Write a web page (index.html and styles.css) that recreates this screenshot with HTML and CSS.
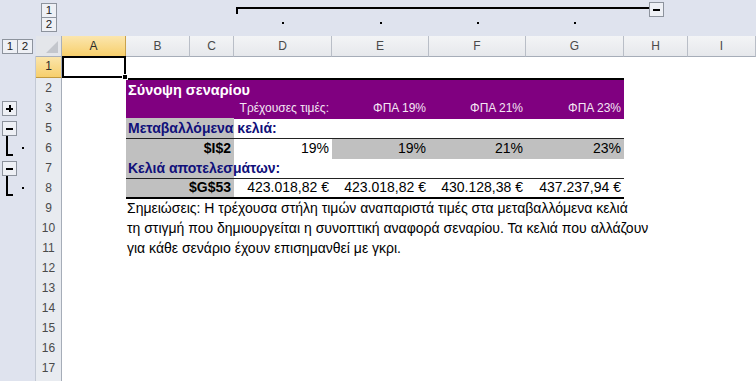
FILE: index.html
```html
<!DOCTYPE html>
<html lang="el">
<head>
<meta charset="utf-8">
<title>Σύνοψη σεναρίου</title>
<link rel="stylesheet" href="styles.css">
</head>
<body>
<div class="sheet">
  <div class="row top">
    <div class="lvl-col c2"><span class="lbtn">1</span><span class="lbtn">2</span></div>
    <div class="dotcell cD"><i class="dot"></i></div>
    <div class="dotcell cE"><i class="dot"></i></div>
    <div class="dotcell cF"><i class="dot"></i></div>
    <div class="dotcell cG"><i class="dot"></i></div>
    <div class="hbracket"><span class="hline"></span><span class="obtn minus"></span></div>
  </div>
  <div class="row hdr">
    <div class="ol lvl-row"><span class="lbtn">1</span><span class="lbtn">2</span></div>
    <div class="corner c2"><i class="tri"></i></div>
    <div class="ch cA sel">A</div>
    <div class="ch cB">B</div>
    <div class="ch cC">C</div>
    <div class="ch cD">D</div>
    <div class="ch cE">E</div>
    <div class="ch cF">F</div>
    <div class="ch cG">G</div>
    <div class="ch cH">H</div>
    <div class="ch cI">I</div>
  </div>
  <div class="row r1">
    <div class="ol"></div>
    <div class="rh sel">1</div>
    <div class="cA selbox"></div>
  </div>
  <div class="row">
    <div class="ol"></div>
    <div class="rh">2</div>
    <div class="purple title">Σύνοψη σεναρίου</div>
  </div>
  <div class="row">
    <div class="ol ol-btn"><span class="obtn plus"></span></div>
    <div class="rh">3</div>
    <div class="purple"></div>
    <div class="cell cD right wt">Τρέχουσες τιμές:</div>
    <div class="cell cE right wt">ΦΠΑ 19%</div>
    <div class="cell cF right wt">ΦΠΑ 21%</div>
    <div class="cell cG right wt">ΦΠΑ 23%</div>
  </div>
  <div class="row">
    <div class="ol ol-start"><span class="obtn minus"></span><span class="vline"></span></div>
    <div class="rh">5</div>
    <div class="cell cBC gray label">Μεταβαλλόμενα κελιά:</div>
  </div>
  <div class="row">
    <div class="ol ol-end"><span class="foot"></span><i class="dot"></i></div>
    <div class="rh">6</div>
    <div class="cell cBC gray ref right bt">$I$2</div>
    <div class="cell cD right bt">19%</div>
    <div class="cell cE gray right bt">19%</div>
    <div class="cell cF gray right bt">21%</div>
    <div class="cell cG gray right bt">23%</div>
  </div>
  <div class="row">
    <div class="ol ol-start"><span class="obtn minus"></span><span class="vline"></span></div>
    <div class="rh">7</div>
    <div class="cell cBC gray label">Κελιά αποτελεσμάτων:</div>
  </div>
  <div class="row">
    <div class="ol ol-end"><span class="foot"></span><i class="dot"></i></div>
    <div class="rh">8</div>
    <div class="cell cBC gray ref right bt bb">$G$53</div>
    <div class="cell cD right bt bb">423.018,82 €</div>
    <div class="cell cE right bt bb">423.018,82 €</div>
    <div class="cell cF right bt bb">430.128,38 €</div>
    <div class="cell cG right bt bb">437.237,94 €</div>
  </div>
  <div class="row">
    <div class="ol"></div>
    <div class="rh">9</div>
    <div class="cell cNote note">Σημειώσεις: Η τρέχουσα στήλη τιμών αναπαριστά τιμές στα μεταβαλλόμενα κελιά</div>
  </div>
  <div class="row">
    <div class="ol"></div>
    <div class="rh">10</div>
    <div class="cell cNote note">τη στιγμή που δημιουργείται η συνοπτική αναφορά σεναρίου. Τα κελιά που αλλάζουν</div>
  </div>
  <div class="row">
    <div class="ol"></div>
    <div class="rh">11</div>
    <div class="cell cNote note">για κάθε σενάριο έχουν επισημανθεί με γκρι.</div>
  </div>
  <div class="row"><div class="ol"></div><div class="rh">12</div></div>
  <div class="row"><div class="ol"></div><div class="rh">13</div></div>
  <div class="row"><div class="ol"></div><div class="rh">14</div></div>
  <div class="row"><div class="ol"></div><div class="rh">15</div></div>
  <div class="row"><div class="ol"></div><div class="rh">16</div></div>
  <div class="row"><div class="ol"></div><div class="rh">17</div></div>
  <div class="row"><div class="ol"></div><div class="rh"></div></div>
</div>
</body>
</html>
```
FILE: styles.css
```css
html, body {
  margin: 0;
  padding: 0;
  background: #fff;
}
body {
  font-family: "Liberation Sans", Arial, sans-serif;
}
.sheet {
  width: 756px;
  height: 381px;
  overflow: hidden;
  background: #fff;
}
.row {
  display: grid;
  grid-template-columns: 36px 26px 64px 64px 44px 98px 97px 97px 98px 64px 68px;
  height: 20px;
}
.row > * {
  grid-row: 1;
  min-width: 0;
}
.c2 { grid-column: 2; }
.cA { grid-column: 3; }
.cB { grid-column: 4; }
.cNote { grid-column: 4 / 12; }
.cBC { grid-column: 4 / 6; }
.cC { grid-column: 5; }
.cD { grid-column: 6; }
.cE { grid-column: 7; }
.cF { grid-column: 8; }
.cG { grid-column: 9; }
.cH { grid-column: 10; }
.cI { grid-column: 11; }

/* top outline band */
.top {
  height: 36px;
  background: #dfe3ee;
}
.lvl-col {
  display: flex;
  flex-direction: column;
  padding: 3px 0 0 5px;
}
.lbtn {
  box-sizing: border-box;
  width: 16px;
  height: 15px;
  border: 1px solid #8d939d;
  background: #eef0f5;
  font-size: 11.5px;
  line-height: 13px;
  color: #222;
  text-align: center;
}
.lvl-col .lbtn + .lbtn { margin-top: -1px; }
.lvl-row .lbtn + .lbtn { margin-left: -1px; }
.dotcell {
  display: flex;
  justify-content: center;
  padding-top: 22px;
}
.dot {
  display: block;
  width: 2px;
  height: 2px;
  background: #000;
}
.hbracket {
  grid-column: 6 / 11;
  display: flex;
  align-items: flex-start;
  padding: 2px 0 0 2px;
}
.hline {
  box-sizing: border-box;
  width: 413px;
  height: 7px;
  margin-top: 5px;
  border-top: 2px solid #000;
  border-left: 2px solid #000;
}
.obtn {
  box-sizing: border-box;
  display: flex;
  align-items: center;
  justify-content: center;
  width: 15px;
  height: 15px;
  border: 1px solid #8d939d;
  background: #eef0f5;
  position: relative;
  flex: none;
}
.obtn::before {
  content: "";
  width: 7px;
  height: 2px;
  background: #000;
}
.obtn.plus::after {
  content: "";
  position: absolute;
  left: 5.5px;
  top: 3px;
  width: 2px;
  height: 7px;
  background: #000;
}

/* headers */
.hdr {
  height: 20px;
}
.ol {
  grid-column: 1;
  background: #dfe3ee;
  border-right: 1px solid #c3c9d4;
}
.lvl-row {
  display: flex;
  padding: 3px 0 0 2px;
  border-right: 0;
}
.corner {
  box-sizing: border-box;
  background: #e4e6ea;
  border-right: 1px solid #a9b0bb;
  border-bottom: 1px solid #a9b0bb;
  position: relative;
}
.tri {
  position: absolute;
  right: 3px;
  bottom: 3px;
  width: 0;
  height: 0;
  border-left: 12px solid transparent;
  border-bottom: 12px solid #c3c6cc;
}
.ch {
  box-sizing: border-box;
  background: linear-gradient(#f3f4f6, #e6e8ec);
  border-right: 1px solid #b9bec7;
  border-bottom: 1px solid #a6adb8;
  font-size: 12px;
  line-height: 20px;
  text-align: center;
  color: #4a4a4a;
}
.ch.sel {
  background: linear-gradient(#fbe6ae, #f7cf6c);
  border-right-color: #c9a24c;
  border-bottom-color: #c29a3e;
  color: #2b2b2b;
}
.rh {
  box-sizing: border-box;
  grid-column: 2;
  background: #e8ebf0;
  border-right: 1px solid #a6adb8;
  border-bottom: 1px solid #c2c8d2;
  font-size: 12px;
  line-height: 20px;
  text-align: center;
  color: #4a4a4a;
}
.rh.sel {
  background: linear-gradient(#fbe6ae, #f7cf6c);
  border-bottom-color: #c29a3e;
  color: #2b2b2b;
}
.r1 { height: 22px; }

.selbox {
  box-sizing: border-box;
  border: 2px solid #000;
  position: relative;
}
.selbox::after {
  content: "";
  position: absolute;
  right: -4px;
  bottom: -4px;
  width: 4px;
  height: 4px;
  background: #000;
  border: 1px solid #fff;
  z-index: 2;
}

/* table */
.purple {
  grid-column: 4 / 10;
  background: #800080;
}
.title {
  border-top: 2px solid #000;
  color: #fff;
  font-weight: bold;
  font-size: 14.5px;
  line-height: 20px;
  padding-left: 2px;
}
.cell {
  box-sizing: border-box;
  font-size: 14px;
  line-height: 20px;
  white-space: nowrap;
  padding: 0 3px;
  color: #000;
}
.right { text-align: right; }
.wt {
  color: #f4e6f4;
  font-size: 12px;
  line-height: 21px;
}
.gray { background: #c0c0c0; }
.label {
  color: #10107a;
  font-weight: bold;
  font-size: 14px;
  padding-left: 2px;
}
.ref {
  font-weight: bold;
  font-size: 14px;
}
.bt { border-top: 1px solid #222; line-height: 18px; }
.bb { border-bottom: 2px solid #000; line-height: 17px; }
.note {
  padding-left: 1px;
  line-height: 21px;
}

/* left outline symbols */
.ol-btn {
  display: flex;
  align-items: center;
  padding-left: 2px;
}
.ol-start {
  display: flex;
  flex-direction: column;
  padding: 3px 0 0 2px;
}
.vline {
  width: 2px;
  flex: 1;
  margin-left: 4px;
  background: #000;
}
.ol-end {
  display: flex;
  align-items: flex-start;
}
.foot {
  box-sizing: border-box;
  width: 7px;
  height: 18px;
  margin-left: 6px;
  border-left: 2px solid #000;
  border-bottom: 2px solid #000;
}
.ol-end .dot {
  margin: 9px 0 0 9px;
}
```
